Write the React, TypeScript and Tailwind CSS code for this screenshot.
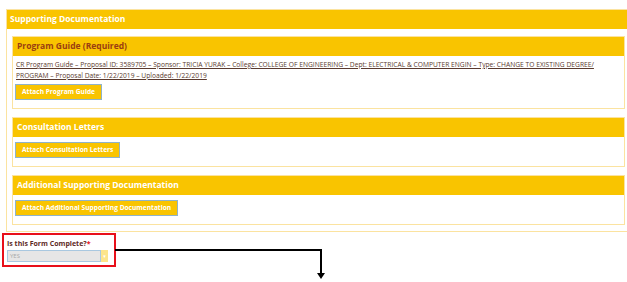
import React from "react";

const font = { fontFamily: '"Open Sans", "DejaVu Sans", sans-serif' };

function Section({ title, titleClass, children }: { title: string; titleClass: string; children: React.ReactNode }) {
    return (
        <div className="border border-[#fbe3a0] bg-white">
            <div className={`h-[19px] bg-[#f9c400] px-[4px] flex items-center text-[8.5px] leading-none font-bold ${titleClass}`}>{title}</div>
            <div className="px-[2px] pt-[5px] pb-[8px] flex flex-col items-start">{children}</div>
        </div>
    );
}

function AttachButton({ label }: { label: string }) {
    return (
        <button className="block h-[16px] px-[6px] bg-[#f9c400] border border-[#8fb3c9] text-white text-[6.6px] font-bold leading-none">
            {label}
        </button>
    );
}

export default function App() {
    return (
        <div className="relative w-[627px] h-[282px] bg-white overflow-hidden" style={font}>
            <div className="ml-[6px] mt-[9px] border border-[#fbe3a0] border-r-0">
                <div className="h-[19px] bg-[#f9c400] px-[3px] flex items-center text-white text-[8.5px] leading-none font-bold">
                    Supporting Documentation
                </div>
                <div className="pl-[5px] pr-[2px] pt-[7px] pb-[6px] flex flex-col gap-[8px]">
                    <Section title="Program Guide (Required)" titleClass="text-[#9a3d12]">
                        <div className="-mt-[2px] pl-[1px] pr-[6px] text-[6.7px] leading-[11px] text-[#5a3a2e] underline">
                            CR Program Guide – Proposal ID: 3589705 – Sponsor: TRICIA YURAK – College: COLLEGE OF ENGINEERING – Dept: ELECTRICAL &amp; COMPUTER ENGIN – Type: CHANGE TO EXISTING DEGREE/ PROGRAM – Proposal Date: 1/22/2019 – Uploaded: 1/22/2019
                        </div>
                        <div className="mt-[3px] flex">
                            <AttachButton label="Attach Program Guide" />
                        </div>
                    </Section>
                    <Section title="Consultation Letters" titleClass="text-white">
                        <AttachButton label="Attach Consultation Letters" />
                    </Section>
                    <Section title="Additional Supporting Documentation" titleClass="text-white">
                        <AttachButton label="Attach Additional Supporting Documentation" />
                    </Section>
                </div>
            </div>

            <div className="ml-[2px] mt-[1px] w-[114px] h-[34px] border-2 border-[#e8101a] px-[3px] pt-[4px]">
                <div className="text-[7px] font-bold text-[#5e2a1e] leading-[10px]">
                    Is this Form Complete?<span className="text-[#e8101a]">*</span>
                </div>
                <div className="mt-[1px] flex h-[12px] w-[101px]">
                    <div className="flex-1 bg-[#e6e6e6] border border-[#a9c8e0] text-[6px] text-[#a8a8a8] pl-[2px] leading-[10px]">YES</div>
                    <div className="w-[7px] bg-[#fde58a] flex items-center justify-center text-[5px] leading-none text-white">▾</div>
                </div>
            </div>

            <svg className="absolute left-[115px] top-[248px]" width="212" height="34" viewBox="0 0 212 34">
                <path d="M0 2 H206 V26" fill="none" stroke="#000" strokeWidth="2" />
                <polygon points="202,25 210,25 206,31" fill="#000" />
            </svg>
        </div>
    );
}
